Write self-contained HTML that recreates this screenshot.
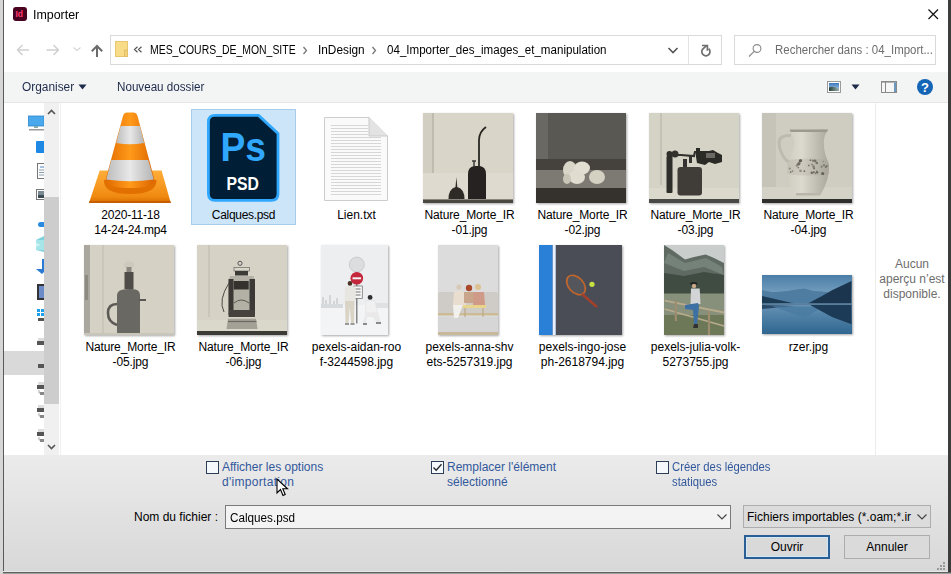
<!DOCTYPE html>
<html><head><meta charset="utf-8">
<style>
*{margin:0;padding:0;box-sizing:border-box}
html,body{width:951px;height:574px;overflow:hidden;background:#fff;font-family:"Liberation Sans",sans-serif}
.a{position:absolute}
.t{position:absolute;white-space:pre;font-size:12px;line-height:15px;color:#000}
.lbl{position:absolute;width:112px;text-align:center;font-size:12px;line-height:15px;color:#000;white-space:pre}
svg{position:absolute;display:block}
</style></head><body>

<svg width="0" height="0" style="position:absolute"><defs><filter id="soft" x="-5%" y="-5%" width="110%" height="110%"><feGaussianBlur stdDeviation="0.6"/></filter></defs></svg>
<!-- title -->
<div class="a" style="left:13px;top:7px;width:14px;height:14px;border-radius:3px;background:#49021f"></div>
<div class="t" style="left:15.5px;top:7px;font-size:8.5px;font-weight:bold;color:#ff3a70">Id</div>
<div class="t" style="left:33px;top:8px;transform-origin:0 0;transform:scaleX(1.035)">Importer</div>
<svg style="left:926px;top:7px" width="14" height="14"><path d="M2.5 2.5L12 12M12 2.5L2.5 12" stroke="#111" stroke-width="1.2"/></svg>

<!-- address row -->
<div class="a" style="left:110px;top:35px;width:612px;height:30px;border:1px solid #d9d9d9"></div>
<div class="a" style="left:688px;top:36px;width:1px;height:28px;background:#e3e3e3"></div>
<div class="a" style="left:734px;top:35px;width:202px;height:30px;border:1px solid #d9d9d9"></div>

<!-- toolbar -->
<div class="a" style="left:4px;top:72px;width:944px;height:30px;background:#f3f4f4"></div>
<div class="a" style="left:4px;top:102px;width:944px;height:1px;background:#e6e6e6"></div>
<div class="t" style="left:22px;top:80px;color:#1e2a4a;transform-origin:0 0;transform:scaleX(0.99)">Organiser</div>
<div class="t" style="left:117px;top:80px;color:#1e2a4a;transform-origin:0 0;transform:scaleX(0.97)">Nouveau dossier</div>

<!-- nav pane -->
<div class="a" style="left:44px;top:103px;width:15px;height:352px;background:#f0f0f0"></div>
<div class="a" style="left:44px;top:197px;width:15px;height:207px;background:#cdcdcd"></div>
<div class="a" style="left:60px;top:103px;width:1px;height:352px;background:#f0f0f0"></div>

<!-- preview pane -->
<div class="a" style="left:875px;top:103px;width:1px;height:352px;background:#ececec"></div>
<div class="t" style="left:876px;top:257px;width:72px;text-align:center;color:#6d6d6d">Aucun
aperçu n’est
disponible.</div>

<div class="a" style="left:191px;top:109px;width:105px;height:116px;background:#cde5f9;border:1px solid #a9cbea"></div>
<svg style="left:88px;top:110px" width="85" height="95" viewBox="0 0 85 95">
<defs><linearGradient id="vo" x1="0" x2="1"><stop offset="0" stop-color="#e06a00"/><stop offset=".5" stop-color="#ff9a1a"/><stop offset="1" stop-color="#dc6400"/></linearGradient>
<linearGradient id="vb" x1="0" y1="0" x2="0" y2="1"><stop offset="0" stop-color="#ffae3a"/><stop offset=".8" stop-color="#f08a10"/><stop offset="1" stop-color="#d86c00"/></linearGradient>
<linearGradient id="vw" x1="0" x2="1"><stop offset="0" stop-color="#bcbcbc"/><stop offset=".5" stop-color="#e8e8e8"/><stop offset="1" stop-color="#b4b4b4"/></linearGradient></defs>
<path d="M11.7 60.6H73.6L82.8 92.9H1Z" fill="url(#vb)"/>
<path d="M1.5 91H82.3L82.8 93H1Z" fill="#c65e00"/>
<path d="M16 70Q15 84 42 84Q69 84 68.6 70Z" fill="#e27000"/>
<path d="M39 2.5H45.5Q48.5 2.5 49.5 6L66.5 70Q66 78 42 78Q18 78 17.5 70L35 6Q36 2.5 39 2.5Z" fill="url(#vo)"/>
<path d="M32.6 15.9H51.9L56.2 33Q42 35.5 28.2 33Z" fill="url(#vw)"/>
<path d="M23.4 50H60.2L65.8 69.5Q42 73 18.2 69.5Z" fill="url(#vw)"/>
</svg>
<svg style="left:206px;top:113px" width="75" height="90" viewBox="0 0 75 90">
<path d="M9 2.4H52.5L72 20.5V80.8Q72 87.4 65.4 87.4H9Q2.4 87.4 2.4 80.8V9Q2.4 2.4 9 2.4Z" fill="#001e36" stroke="#31a8ff" stroke-width="2.8" stroke-linejoin="round"/>
<text x="14.5" y="48.3" font-family="Liberation Sans" font-weight="bold" font-size="40" fill="#31a8ff" textLength="45.5" lengthAdjust="spacingAndGlyphs">Ps</text>
<text x="20.6" y="76.8" font-family="Liberation Sans" font-weight="bold" font-size="18" fill="#fff" textLength="32.4" lengthAdjust="spacingAndGlyphs">PSD</text>
</svg>
<svg style="left:324px;top:117px" width="65" height="85" viewBox="0 0 65 85">
<path d="M0.5 0.5H45L63.5 19V83.5H0.5Z" fill="#fafafa" stroke="#cdcdcd"/>
<path d="M7 8.5H44" stroke="#d6d6d6" stroke-width="1"/><path d="M7 11.5H44" stroke="#d6d6d6" stroke-width="1"/><path d="M7 14.5H44" stroke="#d6d6d6" stroke-width="1"/><path d="M7 17.5H44" stroke="#d6d6d6" stroke-width="1"/><path d="M7 20.5H57" stroke="#d6d6d6" stroke-width="1"/><path d="M7 23.5H57" stroke="#d6d6d6" stroke-width="1"/><path d="M7 26.5H57" stroke="#d6d6d6" stroke-width="1"/><path d="M7 29.5H57" stroke="#d6d6d6" stroke-width="1"/><path d="M7 32.5H57" stroke="#d6d6d6" stroke-width="1"/><path d="M7 35.5H57" stroke="#d6d6d6" stroke-width="1"/><path d="M7 38.5H57" stroke="#d6d6d6" stroke-width="1"/><path d="M7 41.5H57" stroke="#d6d6d6" stroke-width="1"/><path d="M7 44.5H57" stroke="#d6d6d6" stroke-width="1"/><path d="M7 47.5H57" stroke="#d6d6d6" stroke-width="1"/><path d="M7 50.5H57" stroke="#d6d6d6" stroke-width="1"/><path d="M7 53.5H57" stroke="#d6d6d6" stroke-width="1"/><path d="M7 56.5H57" stroke="#d6d6d6" stroke-width="1"/><path d="M7 59.5H57" stroke="#d6d6d6" stroke-width="1"/><path d="M7 62.5H57" stroke="#d6d6d6" stroke-width="1"/><path d="M7 65.5H57" stroke="#d6d6d6" stroke-width="1"/><path d="M7 68.5H57" stroke="#d6d6d6" stroke-width="1"/><path d="M7 71.5H57" stroke="#d6d6d6" stroke-width="1"/><path d="M7 74.5H57" stroke="#d6d6d6" stroke-width="1"/><path d="M7 77.5H57" stroke="#d6d6d6" stroke-width="1"/>
<path d="M45 0.5V19H63.5" fill="#e3e3e3" stroke="#c9c9c9"/>
</svg>
<div class="lbl" style="left:74.5px;top:208px;letter-spacing:-0.2px">2020-11-18
14-24-24.mp4</div>
<div class="lbl" style="left:187.5px;top:208px;letter-spacing:-0.3px">Calques.psd</div>
<div class="lbl" style="left:300.5px;top:208px;">Lien.txt</div>
<div class="lbl" style="left:413.5px;top:208px;letter-spacing:-0.12px">Nature_Morte_IR
-01.jpg</div>
<div class="lbl" style="left:526.5px;top:208px;letter-spacing:-0.12px">Nature_Morte_IR
-02.jpg</div>
<div class="lbl" style="left:639.5px;top:208px;letter-spacing:-0.12px">Nature_Morte_IR
-03.jpg</div>
<div class="lbl" style="left:752.5px;top:208px;letter-spacing:-0.12px">Nature_Morte_IR
-04.jpg</div>
<div class="lbl" style="left:74.5px;top:340px;letter-spacing:-0.12px">Nature_Morte_IR
-05.jpg</div>
<div class="lbl" style="left:187.5px;top:340px;letter-spacing:-0.12px">Nature_Morte_IR
-06.jpg</div>
<div class="lbl" style="left:300.5px;top:340px;">pexels-aidan-roo
f-3244598.jpg</div>
<div class="lbl" style="left:413.5px;top:340px;">pexels-anna-shv
ets-5257319.jpg</div>
<div class="lbl" style="left:526.5px;top:340px;">pexels-ingo-jose
ph-2618794.jpg</div>
<div class="lbl" style="left:639.5px;top:340px;">pexels-julia-volk-
5273755.jpg</div>
<div class="lbl" style="left:752.5px;top:340px;">rzer.jpg</div>
<svg style="left:423px;top:113px;filter:drop-shadow(1px 1px 1px rgba(0,0,0,.35))" width="90" height="90" viewBox="0 0 90 90"><rect width="90" height="90" fill="#d9d5c9"/><g filter="url(#soft)"><rect x="0" y="0" width="10" height="60" fill="#d2cec2"/><path d="M10 0V60" stroke="#aaa699" stroke-width="1"/>
<rect x="0" y="60" width="90" height="26" fill="#dedacf"/>
<path d="M25.5 86Q25.5 76 32.5 74L33.4 64L34.3 74Q41.5 76 41.5 86Z" fill="#2e2c28"/>
<path d="M45 86V61Q45 54 51 53H57Q63 54 63 61V86Z" fill="#262420"/>
<path d="M56 54V27Q56 19 63 14" fill="none" stroke="#2a2824" stroke-width="1.8"/>
<path d="M51 54V48M49 48H53" fill="none" stroke="#3a3834" stroke-width="1.5"/>
<rect x="0" y="86" width="90" height="1" fill="#8a877f"/><rect x="0" y="87" width="90" height="3" fill="#4a4843"/></g></svg>
<svg style="left:536px;top:113px;filter:drop-shadow(1px 1px 1px rgba(0,0,0,.35))" width="90" height="90" viewBox="0 0 90 90"><rect width="90" height="90" fill="#5a5852"/><g filter="url(#soft)"><rect x="0" y="0" width="12" height="55" fill="#6a6862"/>
<rect x="0" y="46" width="90" height="11" fill="#45433e"/>
<rect x="0" y="57" width="90" height="18" fill="#7c7a72"/>
<rect x="0" y="75" width="90" height="15" fill="#34322e"/>
<ellipse cx="34" cy="57" rx="7" ry="9" fill="#d9d6c8"/><ellipse cx="46" cy="55" rx="8" ry="6.5" fill="#e2dfd2"/>
<ellipse cx="41" cy="64" rx="8" ry="7" fill="#e0ddd0"/><ellipse cx="61" cy="64" rx="8" ry="7" fill="#d4d1c2"/><ellipse cx="31" cy="66" rx="4" ry="5" fill="#c9c6b8"/></g></svg>
<svg style="left:649px;top:113px;filter:drop-shadow(1px 1px 1px rgba(0,0,0,.35))" width="90" height="90" viewBox="0 0 90 90"><rect width="90" height="90" fill="#d5d2c6"/><g filter="url(#soft)"><path d="M12 0V72" stroke="#b3b0a3" stroke-width="1"/>
<rect x="0" y="75" width="90" height="11" fill="#dbd8cc"/>
<rect x="28.5" y="54" width="24.5" height="28.5" rx="3" fill="#3f3d39"/>
<path d="M34 54V46H38V54M40 50V42H43V50" fill="#353330"/>
<rect x="17.5" y="43" width="6" height="37" rx="1" fill="#2f2d29"/>
<circle cx="20.5" cy="41" r="3" fill="#2f2d29"/><circle cx="26" cy="41" r="3.5" fill="#35332f"/>
<path d="M24 42H32L45 43L46 39H50" fill="none" stroke="#33312d" stroke-width="2.2"/>
<path d="M47 35H51V38H60L64 37L69 40L73 42V49L66 51L60 49L56 52L48 50L47 44Z" fill="#2c2a26"/>
<path d="M57 40H66V45H57Z" fill="#6b6963"/>
<rect x="0" y="86" width="90" height="4" fill="#4a4844"/></g></svg>
<svg style="left:762px;top:113px;filter:drop-shadow(1px 1px 1px rgba(0,0,0,.35))" width="90" height="90" viewBox="0 0 90 90">
<defs><linearGradient id="pg" x1="0" x2="1"><stop offset="0" stop-color="#cfccc0"/><stop offset=".35" stop-color="#dcd9ce"/><stop offset="1" stop-color="#a9a69c"/></linearGradient></defs>
<rect width="90" height="90" fill="#cfcdc2"/><g filter="url(#soft)"><rect x="0" y="0" width="14" height="90" fill="#c6c4b9"/>
<rect x="0" y="74" width="90" height="12" fill="#d4d2c7"/>
<path d="M29 22.5Q17 22 17 30Q18 42 26 49" fill="none" stroke="#bdbab0" stroke-width="3"/>
<path d="M27.6 16.6L66 16.6L63 22Q61.5 27 61.8 31Q62 40 67 51.5Q68 66 58.4 82L33.6 82Q24 66 25 51.5Q30 40 32.8 31Q32 24 27.6 16.6Z" fill="url(#pg)"/>
<path d="M27.6 16.6L66 16.6L65 19L28.6 19Z" fill="#9c998f"/>
<path d="M25.5 47Q46 44 66.5 47L67 61Q46 64 25.5 61Z" fill="#a3a095" opacity=".25"/>
<circle cx="36.3" cy="54.6" r="0.9" fill="#5e5b53" opacity="0.74"/><circle cx="51.4" cy="47.9" r="0.5" fill="#5e5b53" opacity="0.83"/><circle cx="37.1" cy="50.3" r="1.5" fill="#5e5b53" opacity="0.69"/><circle cx="59.6" cy="53.7" r="1.1" fill="#5e5b53" opacity="0.56"/><circle cx="51.8" cy="59.2" r="1.0" fill="#5e5b53" opacity="0.80"/><circle cx="53.2" cy="47.9" r="1.3" fill="#5e5b53" opacity="0.74"/><circle cx="38.7" cy="47.4" r="1.4" fill="#5e5b53" opacity="0.69"/><circle cx="55.0" cy="59.3" r="1.2" fill="#5e5b53" opacity="0.87"/><circle cx="42.4" cy="58.2" r="0.9" fill="#5e5b53" opacity="0.87"/><circle cx="61.3" cy="48.4" r="0.6" fill="#5e5b53" opacity="0.59"/><circle cx="64.7" cy="53.1" r="1.1" fill="#5e5b53" opacity="0.62"/><circle cx="46.8" cy="52.4" r="0.9" fill="#5e5b53" opacity="0.73"/><circle cx="49.8" cy="59.7" r="1.2" fill="#5e5b53" opacity="0.87"/><circle cx="60.4" cy="60.9" r="1.2" fill="#5e5b53" opacity="0.57"/><circle cx="60.6" cy="60.5" r="1.4" fill="#5e5b53" opacity="0.73"/><circle cx="54.8" cy="50.0" r="1.3" fill="#5e5b53" opacity="0.73"/><circle cx="38.1" cy="47.9" r="1.4" fill="#5e5b53" opacity="0.90"/><circle cx="30.5" cy="58.2" r="0.9" fill="#5e5b53" opacity="0.56"/><circle cx="38.5" cy="57.8" r="1.4" fill="#5e5b53" opacity="0.52"/><circle cx="51.0" cy="47.6" r="1.2" fill="#5e5b53" opacity="0.63"/><circle cx="61.4" cy="60.7" r="1.0" fill="#5e5b53" opacity="0.90"/><circle cx="39.1" cy="48.1" r="1.1" fill="#5e5b53" opacity="0.51"/><circle cx="34.7" cy="52.7" r="1.1" fill="#5e5b53" opacity="0.56"/><circle cx="28.7" cy="59.1" r="0.8" fill="#5e5b53" opacity="0.88"/><circle cx="62.0" cy="52.3" r="1.0" fill="#5e5b53" opacity="0.71"/><circle cx="52.1" cy="55.3" r="1.1" fill="#5e5b53" opacity="0.75"/><circle cx="63.7" cy="54.1" r="0.9" fill="#5e5b53" opacity="0.79"/><circle cx="36.3" cy="51.2" r="1.5" fill="#5e5b53" opacity="0.71"/><circle cx="48.4" cy="47.2" r="0.9" fill="#5e5b53" opacity="0.73"/><circle cx="27.8" cy="55.6" r="1.1" fill="#5e5b53" opacity="0.52"/><circle cx="51.5" cy="53.5" r="1.2" fill="#5e5b53" opacity="0.64"/><circle cx="54.6" cy="57.3" r="0.5" fill="#5e5b53" opacity="0.52"/><circle cx="53.4" cy="60.5" r="0.8" fill="#5e5b53" opacity="0.68"/><circle cx="50.1" cy="51.5" r="0.9" fill="#5e5b53" opacity="0.63"/>
<path d="M34 80H58V82.5H34Z" fill="#b9b6ab"/></g>
<rect x="0" y="86" width="90" height="4" fill="#2e2e2c"/></svg>
<svg style="left:84px;top:245px;filter:drop-shadow(1px 1px 1px rgba(0,0,0,.35))" width="90" height="90" viewBox="0 0 90 90"><rect width="90" height="90" fill="#d5d1c5"/><g filter="url(#soft)"><rect x="0" y="0" width="6" height="90" fill="#aaa79e"/><rect x="1" y="30" width="3" height="25" fill="#8d8a82"/><path d="M19 0V88" stroke="#bfbcaf" stroke-width="1"/>
<path d="M33 90V50Q33 44 44 44H48Q56 44 56 50V90Z" fill="#6a6862"/>
<rect x="40.5" y="27" width="9" height="17" fill="#4f4d48"/>
<ellipse cx="45" cy="20" rx="5" ry="3.8" fill="#cdc9bd"/><rect x="42.5" y="22" width="5" height="5" fill="#8a877f"/>
<path d="M33 59Q24 59 24 68Q24 77 33 80" fill="none" stroke="#5c5a55" stroke-width="2.6"/>
<path d="M55 55H62" stroke="#5a5852" stroke-width="2"/>
<rect x="0" y="88" width="90" height="2" fill="#c9c5b9"/></g></svg>
<svg style="left:197px;top:245px;filter:drop-shadow(1px 1px 1px rgba(0,0,0,.35))" width="90" height="90" viewBox="0 0 90 90"><rect width="90" height="90" fill="#d6d2c6"/><g filter="url(#soft)"><path d="M12 0V72" stroke="#bbb8ac" stroke-width="1"/>
<rect x="0" y="75" width="90" height="11" fill="#dad7cb"/>
<circle cx="43" cy="18.3" r="2.1" fill="none" stroke="#555" stroke-width="1"/>
<rect x="37" y="22.5" width="15.4" height="3.5" fill="#d8d5cb" stroke="#6a6862" stroke-width=".7"/>
<rect x="38" y="26" width="13" height="4.5" fill="#3c3a36"/>
<path d="M33 31H56.5L58 36V69H31.5V36Z" fill="#b3b0a6"/>
<rect x="36.7" y="36" width="15" height="8.5" fill="#34322e"/>
<path d="M31.5 34H36.5V70H31.5ZM52.5 34H58V70H52.5Z" fill="#3a3834"/>
<path d="M37 58Q44 52 52 58" fill="none" stroke="#5a5852" stroke-width="1"/>
<path d="M32 38Q21 55 27 67" fill="none" stroke="#4a4844" stroke-width="1"/>
<path d="M32 65H57.5L58 72H31.5Z" fill="#45433e"/>
<path d="M31 73.7H59L60.5 84H29.5Z" fill="#a3a096"/><path d="M31 76.5H59.5" stroke="#6a6862" stroke-width="1.2"/>
<rect x="0" y="86" width="90" height="4" fill="#3c3a36"/></g></svg>
<svg style="left:321px;top:245px;filter:drop-shadow(1px 1px 1px rgba(0,0,0,.35))" width="67" height="90" viewBox="0 0 67 90"><rect width="67" height="90" fill="#eceef0"/><g filter="url(#soft)"><rect x="0" y="60" width="67" height="30" fill="#f3f4f5"/>
<path d="M2 62V52M5 62V55M9 62V50M13 62V56M16 62V53" stroke="#c4c7ca" stroke-width="1.2"/>
<rect x="0" y="59" width="22" height="4" fill="#d7dadd"/>
<path d="M50 58H67V63H50Z" fill="#dfe1e3"/>
<path d="M35.8 14V78.5" stroke="#6a6a6a" stroke-width="1.2"/>
<circle cx="35.8" cy="19.6" r="7.5" fill="#dcdddf" stroke="#b8babc" stroke-width=".6"/>
<circle cx="35.8" cy="33.3" r="6.3" fill="#c4283a"/><rect x="31.5" y="32.3" width="8.6" height="2" fill="#f2f2f2"/>
<rect x="32.8" y="41" width="8.5" height="12.6" fill="#f4f4f4" stroke="#6a6a6a" stroke-width=".7"/>
<path d="M34.5 44H39.5M34.5 47H39.5M34.5 50H39.5" stroke="#555" stroke-width=".8"/>
<circle cx="29" cy="38.4" r="2.3" fill="#4a3024"/>
<path d="M24 41.5H34L34.5 56H23.5Z" fill="#e8e6e1"/>
<path d="M24 56H33.5L33 78H30L28.8 62L27.5 78H24.5Z" fill="#dad4c6"/>
<path d="M24 78H28V80H24ZM29.5 78H33.5V80H29.5Z" fill="#9a9a9a"/>
<circle cx="49.1" cy="52.4" r="2.4" fill="#2e2e2e"/>
<path d="M45 55.5H54L56.5 68H44.5Z" fill="#f0f0f0" stroke="#dcdcdc" stroke-width=".5"/>
<path d="M44.5 68H57L60 77H55L52 72H46L45 78H42Z" fill="#e9e9ea"/>
<path d="M55 77H60V79H55ZM42 78H46V80H42Z" fill="#8a8a8a"/>
</g></svg>
<svg style="left:438px;top:245px;filter:drop-shadow(1px 1px 1px rgba(0,0,0,.35))" width="60" height="90" viewBox="0 0 60 90"><rect width="60" height="90" fill="#dcdcdc"/><g filter="url(#soft)"><rect x="0" y="72" width="60" height="15" fill="#d6d6d6"/><rect x="0" y="87" width="60" height="3" fill="#c8b89a"/>
<rect x="0" y="47" width="60" height="22" rx="2" fill="#cfcbc6"/><rect x="0" y="68" width="60" height="2.5" fill="#cdbb96"/>
<circle cx="21" cy="42" r="2.6" fill="#d8c9b6"/><path d="M16 46H26L28 60H15Z" fill="#e9ddd0"/><path d="M15 60H25L20 73H16Z" fill="#f2f0ec"/>
<circle cx="31" cy="43" r="3.2" fill="#a94a2c"/><path d="M26 47H36L37 58H26Z" fill="#c9a58b"/>
<circle cx="40" cy="42" r="3" fill="#dcc192"/><path d="M36 47H46L47 60H35Z" fill="#d09a88"/>
<path d="M25 60H48V63H25Z" fill="#e8d48a"/><path d="M27 63V72M45 63V72" stroke="#b9a27a" stroke-width="1"/></g></svg>
<svg style="left:539px;top:245px;filter:drop-shadow(1px 1px 1px rgba(0,0,0,.35))" width="83" height="90" viewBox="0 0 83 90"><rect width="83" height="90" fill="#4b4d56"/><g filter="url(#soft)"><rect x="0" y="0" width="13.7" height="90" fill="#2a7fd6"/><rect x="13.7" y="0" width="3" height="90" fill="#e5efff"/>
<g transform="rotate(-42 37 40)"><ellipse cx="37" cy="40" rx="7.5" ry="11.2" fill="#55555b" stroke="#c3662c" stroke-width="1.7"/></g>
<path d="M43 49L58 62" stroke="#a3402a" stroke-width="2.4"/>
<circle cx="53" cy="39.3" r="2.6" fill="#c7e043"/></g></svg>
<svg style="left:664px;top:245px;filter:drop-shadow(1px 1px 1px rgba(0,0,0,.35))" width="60" height="90" viewBox="0 0 60 90"><rect width="60" height="90" fill="#c9cdcc"/><g filter="url(#soft)">
<path d="M0 0L8 5L21 14.5L30 12L41.7 9.4L50 13L60 18V50H0Z" fill="#5e6b62"/>
<path d="M4 8L21 18L42 13L58 22L60 30L40 22L20 26L0 18Z" fill="#7f8b84" opacity=".7"/>
<path d="M0 28L20 31L40 27L60 30V49H0Z" fill="#404c43"/>
<rect x="0" y="48.5" width="60" height="41.5" fill="#87907a"/><rect x="0" y="70" width="60" height="20" fill="#6d7858"/>
<path d="M0.7 55.6L60 67.5M0.7 64L60 81" stroke="#b8aa8c" stroke-width="1.8"/>
<path d="M11.8 56V76M45 66V90" stroke="#9d8d6e" stroke-width="2.2"/>
<ellipse cx="29.7" cy="38.5" rx="3.6" ry="1.6" fill="#222"/><circle cx="30" cy="41" r="2.2" fill="#c9a88a"/>
<path d="M27 43.6H35.7L36.5 59H26.5Z" fill="#d2d4d6"/>
<path d="M21 60L34 58L35 61L33 79H30L29 65L21 64Z" fill="#3e6fa3"/>
<path d="M30 79H34V83H29Z" fill="#333"/>
</g></svg>
<svg style="left:762px;top:275px;filter:drop-shadow(1px 1px 1px rgba(0,0,0,.35))" width="90" height="59" viewBox="0 0 90 59"><defs><linearGradient id="rs" x1="0" y1="0" x2="0" y2="1"><stop offset="0" stop-color="#4a7ea8"/><stop offset="1" stop-color="#8fb2cb"/></linearGradient>
<linearGradient id="rw" x1="0" y1="0" x2="0" y2="1"><stop offset="0" stop-color="#6893b5"/><stop offset="1" stop-color="#2f6690"/></linearGradient></defs><rect width="90" height="30" fill="url(#rs)"/><g filter="url(#soft)">
<path d="M0 15.3L11 17.2L26 16L32.4 14.7L42.4 13.4L51.2 16L60 16.6L70 17.8V29H0Z" fill="#4f7ba1"/>
<path d="M0 21L32.4 28.5L0 29Z" fill="#1f3a54"/>
<path d="M45 29L60 21L70 15.3L89.5 5.9V29.5Z" fill="#1c3650"/>
<rect x="0" y="28.5" width="90" height="30.5" fill="url(#rw)"/>
<path d="M0 28.5H90V30H0Z" fill="#5a7f9c"/>
<path d="M0 30L32 31L0 34Z" fill="#2a4a66"/>
<path d="M10 31L42.4 43L60 32Z" fill="#4a7aa0" opacity=".8"/>
<path d="M48 30H89.5V49.2L70 42Z" fill="#1e3b57"/>
</g></svg>

<!-- bottom panel -->
<div class="a" style="left:4px;top:455px;width:944px;height:117px;background:linear-gradient(#ebebeb,#d8d8d8)"></div>


<!-- address row icons -->
<svg style="left:15px;top:43px" width="16" height="14" viewBox="0 0 16 14"><path d="M2.5 7H14M7.5 2L2.5 7L7.5 12" fill="none" stroke="#cfcfcf" stroke-width="1.4"/></svg>
<svg style="left:45px;top:43px" width="16" height="14" viewBox="0 0 16 14"><path d="M1.5 7H13M8.5 2L13.5 7L8.5 12" fill="none" stroke="#cfcfcf" stroke-width="1.4"/></svg>
<svg style="left:72px;top:46px" width="10" height="6" viewBox="0 0 10 6"><path d="M1.5 1.5L5 4.5L8.5 1.5" fill="none" stroke="#d4d4d4" stroke-width="1.1"/></svg>
<svg style="left:89px;top:44px" width="16" height="14" viewBox="0 0 16 14"><path d="M8 13V2M2.8 7.2L8 2L13.2 7.2" fill="none" stroke="#6a6a6a" stroke-width="2"/></svg>
<svg style="left:114px;top:40px" width="16" height="18" viewBox="0 0 16 18"><rect x="1.5" y="1.5" width="12" height="15" fill="#f8dc88" stroke="#e6c670" stroke-width="1"/><rect x="10.5" y="10" width="3" height="6.5" fill="#f3d27a" stroke="#e0bf68" stroke-width="1"/></svg>
<svg style="left:133px;top:46px" width="10" height="7" viewBox="0 0 10 7"><path d="M4.5 0.8L1.5 3.5L4.5 6.2M8.5 0.8L5.5 3.5L8.5 6.2" fill="none" stroke="#555" stroke-width="1.2"/></svg>
<div class="t" style="left:150px;top:43px;transform-origin:0 0;transform:scaleX(0.87)">MES_COURS_DE_MON_SITE</div>
<svg style="left:302px;top:46px" width="6" height="9" viewBox="0 0 6 9"><path d="M1.5 1L4.5 4.5L1.5 8" fill="none" stroke="#777" stroke-width="1.3"/></svg>
<div class="t" style="left:318px;top:43px;transform-origin:0 0;transform:scaleX(0.985)">InDesign</div>
<svg style="left:371px;top:46px" width="6" height="9" viewBox="0 0 6 9"><path d="M1.5 1L4.5 4.5L1.5 8" fill="none" stroke="#777" stroke-width="1.3"/></svg>
<div class="t" style="left:387px;top:43px;transform-origin:0 0;transform:scaleX(0.965)">04_Importer_des_images_et_manipulation</div>
<svg style="left:667px;top:46px" width="12" height="9" viewBox="0 0 12 9"><path d="M1.5 2L6 6.5L10.5 2" fill="none" stroke="#555" stroke-width="1.6"/></svg>
<svg style="left:699px;top:44px" width="14" height="14" viewBox="0 0 14 14"><path d="M9.6 4.6A4.1 4.1 0 1 1 4.6 4.3L7.4 1.6" fill="none" stroke="#6e6e6e" stroke-width="1.7"/><path d="M3 1.5H8.4V6.8" fill="none" stroke="#6e6e6e" stroke-width="1.7"/></svg>
<svg style="left:747px;top:43px" width="16" height="15" viewBox="0 0 16 15"><circle cx="10" cy="5.5" r="3.9" fill="none" stroke="#8a8a8a" stroke-width="1.1"/><path d="M7.2 8.3L2 13.5" stroke="#8a8a8a" stroke-width="1.2"/></svg>
<div class="t" style="left:775px;top:43px;color:#6d6d6d;transform-origin:0 0;transform:scaleX(0.955)">Rechercher dans : 04_Import...</div>

<!-- toolbar items -->
<svg style="left:78px;top:84px" width="9" height="6" viewBox="0 0 9 6"><path d="M0.5 0.5H8.5L4.5 5.5Z" fill="#1e2a4a"/></svg>
<svg style="left:826px;top:80px" width="16" height="14" viewBox="0 0 16 14"><defs><linearGradient id="vs" x1="0" y1="0" x2="0" y2="1"><stop offset="0" stop-color="#3a78c0"/><stop offset="1" stop-color="#b9d3e6"/></linearGradient><linearGradient id="vl" x1="0" y1="0" x2="1" y2="0"><stop offset="0" stop-color="#25423a"/><stop offset="1" stop-color="#9ab0b0"/></linearGradient></defs><rect x="1.5" y="1.5" width="13" height="11" fill="#fff" stroke="#9a9a9a"/><rect x="3" y="3" width="10" height="8" fill="url(#vs)"/><path d="M3 7.5Q7 5.5 13 9V11H3Z" fill="url(#vl)"/></svg>
<svg style="left:851px;top:84px" width="9" height="6" viewBox="0 0 9 6"><path d="M0.5 0.5H8.5L4.5 5.5Z" fill="#1e2a4a"/></svg>
<svg style="left:880px;top:80px" width="18" height="14" viewBox="0 0 18 14"><rect x="1.5" y="1.5" width="15" height="11" fill="#f6f6f6" stroke="#8a8a8a"/><rect x="1" y="1" width="16" height="1.6" fill="#8a8a8a"/><path d="M5.5 2V12" stroke="#8a8a8a"/><rect x="14" y="2.5" width="2" height="9.5" fill="#6d98c0"/></svg>
<svg style="left:916px;top:78px" width="18" height="18" viewBox="0 0 18 18"><circle cx="9" cy="9" r="8" fill="#1565b7"/><text x="9" y="13.6" text-anchor="middle" font-family="Liberation Sans" font-weight="bold" font-size="13" fill="#fff">?</text></svg>

<!-- nav pane icons -->
<svg style="left:28px;top:115px" width="16" height="17" viewBox="0 0 16 17"><rect x="0.5" y="1" width="15.5" height="10" fill="#4aa8ec" stroke="#2f86cc" stroke-width="0.8"/><rect x="6" y="11" width="4" height="2" fill="#8aa"/><rect x="1" y="14" width="15" height="1.5" fill="#9a9a9a"/></svg>
<div class="a" style="left:36px;top:141px;width:8px;height:12px;background:#1e88e5;border-radius:1px 0 0 1px"></div>
<svg style="left:37px;top:163px" width="7" height="16" viewBox="0 0 7 16"><rect x="0.5" y="0.5" width="7" height="15" fill="#fff" stroke="#777"/><path d="M3 4H7" stroke="#4a80c0"/><path d="M2 7H7M2 9.5H7M2 12H7" stroke="#8a9aaa"/></svg>
<svg style="left:36px;top:189px" width="8" height="11" viewBox="0 0 8 11"><rect x="0.5" y="0.5" width="8" height="10" fill="#fff" stroke="#777"/><rect x="2" y="2" width="6" height="7" fill="#7a8a92"/><rect x="2" y="6" width="6" height="3" fill="#3a4a50"/></svg>
<div class="a" style="left:38px;top:222px;width:6px;height:5px;background:#2a8ae0;border-radius:3px 0 0 3px"></div>
<svg style="left:36px;top:236px" width="8" height="16" viewBox="0 0 8 16"><path d="M8 0L0 4V7L8 10ZM8 7L0 11V14L8 16Z" fill="#7dd3dc"/><rect x="0" y="4" width="8" height="10" fill="#b8ecf0" opacity=".7"/></svg>
<svg style="left:36px;top:259px" width="8" height="16" viewBox="0 0 8 16"><path d="M6 0V10H0L6 15L8 13V0Z" fill="#2a7ad4"/></svg>
<svg style="left:37px;top:284px" width="7" height="16" viewBox="0 0 7 16"><rect x="0" y="0" width="7" height="16" fill="#333"/><rect x="2" y="2" width="5" height="12" fill="#6a8ac8"/></svg>
<svg style="left:37px;top:309px" width="7" height="8" viewBox="0 0 7 8"><rect x="0" y="0" width="3" height="3" fill="#1ea0e8"/><rect x="4" y="0" width="3" height="3" fill="#1ea0e8"/><rect x="0" y="4" width="3" height="3" fill="#1ea0e8"/><rect x="4" y="4" width="3" height="3" fill="#1ea0e8"/></svg>
<div class="a" style="left:38px;top:318px;width:6px;height:3px;background:#555"></div>
<div class="a" style="left:4px;top:351px;width:40px;height:24px;background:#d9d9d9"></div>
<svg style="left:37px;top:338px" width="7" height="8" viewBox="0 0 7 8"><rect x="1" y="0" width="6" height="3" fill="#ddd"/><rect x="0" y="3" width="7" height="4" fill="#555"/></svg>
<div class="a" style="left:38px;top:364px;width:6px;height:4px;background:#555"></div>
<svg style="left:37px;top:382px" width="7" height="13" viewBox="0 0 7 13"><rect x="1" y="0" width="6" height="3" fill="#ddd"/><rect x="0" y="3" width="7" height="4" fill="#555"/><path d="M2 8V11H7" fill="none" stroke="#aaa"/><rect x="3" y="10" width="4" height="3" fill="#888"/></svg>
<svg style="left:37px;top:405px" width="7" height="13" viewBox="0 0 7 13"><rect x="1" y="0" width="6" height="3" fill="#ddd"/><rect x="0" y="3" width="7" height="4" fill="#555"/><path d="M2 8V11H7" fill="none" stroke="#aaa"/><rect x="3" y="10" width="4" height="3" fill="#888"/></svg>
<svg style="left:37px;top:429px" width="7" height="13" viewBox="0 0 7 13"><rect x="1" y="0" width="6" height="3" fill="#ddd"/><rect x="0" y="3" width="7" height="4" fill="#555"/><path d="M2 8V11H7" fill="none" stroke="#aaa"/><rect x="3" y="10" width="4" height="3" fill="#888"/></svg>
<svg style="left:47px;top:109px" width="9" height="6" viewBox="0 0 9 6"><path d="M1 5L4.5 1.5L8 5" fill="none" stroke="#555" stroke-width="1.6"/></svg>
<svg style="left:47px;top:444px" width="9" height="6" viewBox="0 0 9 6"><path d="M1 1L4.5 4.5L8 1" fill="none" stroke="#555" stroke-width="1.6"/></svg>

<!-- bottom panel controls -->
<div class="a" style="left:206px;top:461px;width:13px;height:13px;border:1px solid #2c3e58;background:#f6f9fb"></div>
<div class="t" style="left:222px;top:460px;color:#32589c">Afficher les options
<span style="letter-spacing:0.3px">d'importation</span></div>
<div class="a" style="left:431px;top:461px;width:13px;height:13px;border:1px solid #2c3e58;background:#f6f9fb"></div>
<svg style="left:431px;top:461px" width="13" height="13" viewBox="0 0 13 13"><path d="M2.5 6.5L5.2 9.3L10.5 3.3" fill="none" stroke="#222" stroke-width="1.3"/></svg>
<div class="t" style="left:447px;top:460px;color:#32589c">Remplacer l'élément
sélectionné</div>
<div class="a" style="left:656px;top:461px;width:13px;height:13px;border:1px solid #2c3e58;background:#f6f9fb"></div>
<div class="t" style="left:672px;top:460px;color:#32589c;transform-origin:0 0;transform:scaleX(0.94)">Créer des légendes
statiques</div>
<div class="t" style="left:134px;top:510px">Nom du fichier :</div>
<div class="a" style="left:225px;top:505px;width:506px;height:24px;border:1px solid #7a7a7a;background:#f3f3f3"></div>
<div class="t" style="left:230px;top:511px;transform-origin:0 0;transform:scaleX(0.975)">Calques.psd</div>
<svg style="left:716px;top:513px" width="12" height="8" viewBox="0 0 12 8"><path d="M1.5 1.5L6 6L10.5 1.5" fill="none" stroke="#444" stroke-width="1.2"/></svg>
<div class="a" style="left:743px;top:505px;width:188px;height:23px;border:1px solid #adadad;background:#dcdcdc"></div>
<div class="t" style="left:747px;top:510px">Fichiers importables (*.oam;*.ir</div>
<svg style="left:916px;top:513px" width="12" height="8" viewBox="0 0 12 8"><path d="M1.5 1.5L6 6L10.5 1.5" fill="none" stroke="#444" stroke-width="1.2"/></svg>
<div class="a" style="left:744px;top:535px;width:86px;height:24px;border:2px solid #2a5e94;background:#d9d9d9;box-shadow:inset 0 0 0 1px #cfeaf6"></div>
<div class="t" style="left:744px;top:540px;width:86px;text-align:center">Ouvrir</div>
<div class="a" style="left:844px;top:535px;width:86px;height:24px;border:1px solid #adadad;background:#dadada"></div>
<div class="t" style="left:844px;top:540px;width:86px;text-align:center">Annuler</div>
<svg style="left:936px;top:561px" width="10" height="10" viewBox="0 0 10 10" fill="#9a9a9a"><rect x="7" y="1" width="2" height="2"/><rect x="4" y="4" width="2" height="2"/><rect x="7" y="4" width="2" height="2"/><rect x="1" y="7" width="2" height="2"/><rect x="4" y="7" width="2" height="2"/><rect x="7" y="7" width="2" height="2"/></svg>
<!-- cursor -->
<svg style="left:276px;top:478px" width="13" height="19" viewBox="0 0 13 19"><path d="M1 1V15L4.5 11.5L7 17.5L9.2 16.5L6.8 10.8H11.5Z" fill="#fff" stroke="#000" stroke-width="1.1"/></svg>

<!-- outer frame -->
<div class="a" style="left:0;top:0;width:3px;height:574px;background:#d6d6d6"></div>
<div class="a" style="left:3px;top:0;width:1px;height:573px;background:#5a5a5a"></div>
<div class="a" style="left:948px;top:0;width:3px;height:574px;background:#3c3c3c"></div>
<div class="a" style="left:3px;top:571px;width:945px;height:1px;background:#e6e6e6"></div><div class="a" style="left:3px;top:572px;width:948px;height:1px;background:#606060"></div><div class="a" style="left:3px;top:573px;width:948px;height:1px;background:#a0a0a0"></div>
</body></html>
